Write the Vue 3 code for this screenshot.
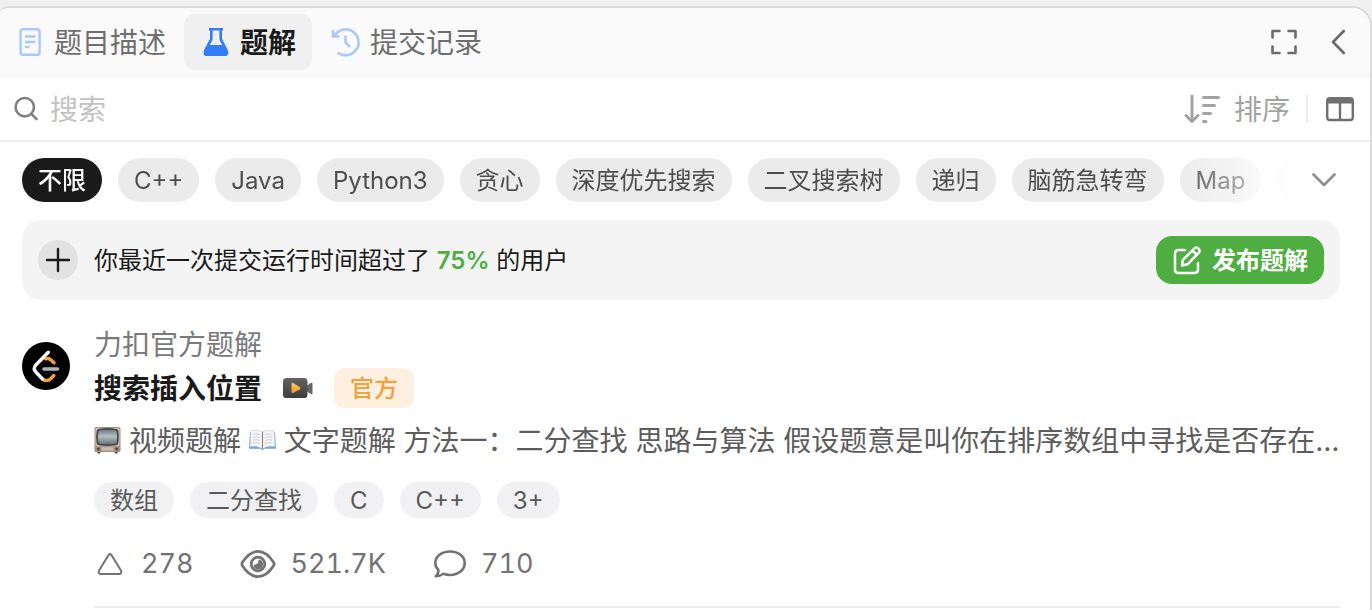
<script setup>
import { ref } from 'vue'

const keyword = ref('')
const active = ref('不限')
const filters = ['不限', 'C++', 'Java', 'Python3', '贪心', '深度优先搜索', '二叉搜索树', '递归', '脑筋急转弯', 'Map', 'String']
const tags = ['数组', '二分查找', 'C', 'C++', '3+']
</script>

<template>
  <main class="panel">
    <header class="tabbar">
      <nav class="tabs">
        <button class="tab first" type="button">
          <svg width="28" height="28" viewBox="0 0 28 28" fill="none" stroke="#a9c8ff" stroke-width="2.4" stroke-linecap="round" stroke-linejoin="round">
            <rect x="6.600" y="1.200" width="19" height="25.600" rx="2.400" />
            <path d="M12 8.500h8.500M12 14h8.500M12 19h2.500" />
          </svg>
          <span>题目描述</span>
        </button>
        <button class="tab current" type="button">
          <svg width="28" height="28" viewBox="0 0 28 28">
            <path fill="#347bf8" fill-rule="evenodd" d="M9 0h14v2.4h-1v7.8c0 .8.2 1.3.8 2.1l5 9.9c1.200 3 .2 5.800-2.400 5.800H6.400C3.800 28 2.800 25.200 4 22.200l5.200-9.900c.6-.8.800-1.300.8-2.100V2.400H9V0Zm3.600 2.400v7.800c0 1.300-.3 2.200-1 3.300L9.800 17h12.400l-1.800-3.500c-.7-1.100-1-2-1-3.300V2.400h-6.800Z" />
          </svg>
          <span>题解</span>
        </button>
        <button class="tab" type="button">
          <svg width="28" height="28" viewBox="0 0 28 28" fill="none" stroke="#a9c8ff" stroke-width="2.600" stroke-linecap="round" stroke-linejoin="round">
            <path d="M4.500 7.500A13 13 0 1 1 8.500 25.200" />
            <path d="M3 3v5.500h5.500" />
            <path d="M15.500 8.500v6l3.800 3.800" />
          </svg>
          <span>提交记录</span>
        </button>
      </nav>
      <div class="actions">
        <button type="button" aria-label="全屏">
          <svg width="26" height="26" viewBox="0 0 26 26" fill="none" stroke="#6b6b6b" stroke-width="2.600" stroke-linecap="round" stroke-linejoin="round">
            <path d="M1.500 8.500V2h7M17.500 2h7v6.500M24.500 17.500V24h-7M8.500 24h-7v-6.500" />
          </svg>
        </button>
        <button type="button" aria-label="收起">
          <svg width="16" height="26" viewBox="0 0 16 26" fill="none" stroke="#6b6b6b" stroke-width="2.600" stroke-linecap="round" stroke-linejoin="round">
            <path d="M13.800 2 3 13l10.800 11" />
          </svg>
        </button>
      </div>
    </header>

    <section class="search">
      <label class="field">
        <svg width="24" height="24" viewBox="0 0 24 24" fill="none" stroke="#808080" stroke-width="2.600" stroke-linecap="round">
          <circle cx="10.800" cy="10.200" r="9.200" />
          <path d="m17.600 17.200 5 5" />
        </svg>
        <input v-model="keyword" type="text" placeholder="搜索" aria-label="搜索" />
      </label>
      <button class="sort" type="button">
        <svg width="36" height="30" viewBox="0 0 36 30" fill="none" stroke="#a3a3a3" stroke-width="3" stroke-linecap="round" stroke-linejoin="round">
          <path d="M8 2v25M2 21.500l6 6 6-6M19.500 3.500h15M19.500 11.500h11M19.500 19.500h7M19.500 27.500h2.500" />
        </svg>
        <span>排序</span>
      </button>
      <button class="layout" type="button" aria-label="布局">
        <svg width="28" height="26" viewBox="0 0 28 26">
          <rect x="1.200" y="2.200" width="25.600" height="21.800" rx="2.800" fill="none" stroke="#707070" stroke-width="2.400" />
          <path d="M1 7.500V4.500Q1 2 3.500 2h21Q27 2 27 4.500v3H1Z" fill="#707070" />
          <path d="M14 7v17" stroke="#707070" stroke-width="2.400" />
        </svg>
      </button>
    </section>

    <div class="content">
      <div class="filters">
        <div class="chips">
          <button v-for="name in filters" :key="name" type="button" class="chip" :class="{ on: name === active }" @click="active = name">
            <span>{{ name }}</span>
          </button>
        </div>
        <button class="more" type="button" aria-label="展开">
          <svg width="24" height="14" viewBox="0 0 24 14" fill="none" stroke="#8c8c8c" stroke-width="2.600" stroke-linecap="round" stroke-linejoin="round">
            <path d="m1.500 1.500 10.500 10.500L22.500 1.500" />
          </svg>
        </button>
      </div>

      <section class="banner">
        <span class="plus">
          <svg width="24" height="24" viewBox="0 0 24 24" stroke="#1a1a1a" stroke-width="2.400" stroke-linecap="round">
            <path d="M12 1v22M1 12h22" />
          </svg>
        </span>
        <p>你最近一次提交运行时间超过了 <b>75%</b> 的用户</p>
        <button class="publish" type="button">
          <svg width="30" height="30" viewBox="0 0 30 30" fill="none" stroke="#fff" stroke-width="2.500" stroke-linecap="round" stroke-linejoin="round">
            <path d="M13 5H6.500Q3 5 3 8.500v16Q3 28 6.500 28h16q3.500 0 3.500-3.500V18" />
            <path d="M10 20.500 10.800 15 22.500 3.300c2.600-2.400 6.700 1.600 4.300 4.300L15.500 19.300 10 20.500ZM20.500 5.500l4.300 4.300" />
          </svg>
          <span>发布题解</span>
        </button>
      </section>

      <article class="post">
        <svg class="avatar" width="48" height="48" viewBox="0 0 48 48" fill="none" stroke-linecap="round" stroke-linejoin="round">
          <circle cx="24" cy="24" r="24" fill="#000" />
          <path d="m23.500 16.800q3.500-.8 5.500 1.200l3 2.800M21 37.500q4.500 2.500 8-1l2.800-3" stroke="#f0a13a" stroke-width="3.400" />
          <path d="M26.300 10.300 13.800 23q-3 3.500 0 7l6.700 7" stroke="#fff" stroke-width="3.400" />
          <path d="M22 27h13.500" stroke="#b3b3b3" stroke-width="3.600" />
        </svg>
        <div class="body">
          <div class="author">力扣官方题解</div>
          <div class="title">
            <h2>搜索插入位置</h2>
            <svg width="30" height="22" viewBox="0 0 30 22">
              <defs>
                <linearGradient id="cam" x1="0" y1="0" x2="0" y2="1"><stop stop-color="#636363" /><stop offset="1" stop-color="#3c3c3c" /></linearGradient>
                <linearGradient id="play" x1="0" y1="0" x2="0" y2="1"><stop stop-color="#ffc65c" /><stop offset="1" stop-color="#ef9a2e" /></linearGradient>
              </defs>
              <path d="M23 9.500 27.500 6q2-1 2 1v9q0 2-2 1L23 13.500Z" fill="#666" />
              <rect y="1" width="24.500" height="20" rx="3.600" fill="url(#cam)" />
              <path d="M8.500 7.500q0-2.500 2.200-1.300l6 3.700q1.800 1.200 0 2.400l-6 3.500Q8.500 17 8.500 14.500Z" fill="url(#play)" />
            </svg>
            <span class="badge">官方</span>
          </div>
          <p class="summary">
            <svg role="img" aria-label="电视" width="27" height="28" viewBox="0 0 28 28">
              <defs>
                <linearGradient id="screen" x1="0" y1="0" x2="0" y2="1"><stop stop-color="#707b7f" /><stop offset=".45" stop-color="#b5c0c3" /><stop offset="1" stop-color="#667276" /></linearGradient>
              </defs>
              <path d="M3 26h4l-1 2H4ZM21 26h4l-1 2h-2Z" fill="#4c403c" />
              <rect x=".5" y=".5" width="27" height="26" rx="2" fill="#a58d84" />
              <rect x="1.500" y="1.500" width="25" height="19" rx="2" fill="#d3c3bb" />
              <path d="M5 2.500Q14 .8 23 2.500q2 0 2.300 2.500.9 6 0 12-.3 2.200-2.300 2.500-9 1.500-18 0-2-.3-2.300-2.500-.9-6 0-12Q3 2.500 5 2.500Z" fill="#414848" />
              <path d="M6 4q8-1.500 16 0 1.500.3 1.600 2 .6 5 0 10-.2 1.500-1.600 1.800-8 1.400-16 0-1.400-.3-1.600-1.800-.6-5 0-10Q4.500 4.300 6 4Z" fill="url(#screen)" />
              <rect x="8" y="21.500" width="12" height="3.500" fill="#cdbbb2" />
              <circle cx="4.500" cy="23.300" r="1.500" fill="#554641" /><circle cx="23.500" cy="23.300" r="1.500" fill="#554641" />
            </svg>
            视频题解
            <svg role="img" aria-label="书" width="27" height="28" viewBox="0 0 28 28">
              <path d="M1 6h26l1 17H16.500q-2.500 2-5 0H0Z" fill="#6da5cf" />
              <path d="M2 4.500Q9 2.500 14 5.500q5-3 12-1L27 21q-7.500-1.500-13 2-5.500-3.500-13-2Z" fill="#f4f4f4" stroke="#c5c8cb" stroke-width=".6" />
              <path d="M14 5.500V23" stroke="#777" stroke-width="1" />
              <path d="M4.500 8q4-.8 7 .5M4.300 11q4-.8 7.200.5M4.100 14q4-.8 7.400.5M3.900 17q4-.8 7.600.5M16.500 8.500q3-1.300 7-.5M16.500 11.500q3-1.300 7.200-.5M16.500 14.500q3-1.300 7.400-.5M16.500 17.500q3-1.300 7.600-.5" fill="none" stroke="#cfcfcf" />
            </svg>
            文字题解 方法一：二分查找 思路与算法 假设题意是叫你在排序数组中寻找是否存在一个目标值，那么可以使用二分查找
          </p>
          <ul class="tags">
            <li v-for="tag in tags" :key="tag">{{ tag }}</li>
          </ul>
          <div class="stats">
            <button class="stat" type="button">
              <svg width="32" height="32" viewBox="0 0 32 32" fill="none" stroke="#737373" stroke-width="2" stroke-linejoin="round">
                <path d="M14.700 6.800q1.300-1.600 2.600 0l9.800 16q.8 2.700-1.600 3.200h-19q-2.400-.5-1.600-3.200Z" />
              </svg>
              <span>278</span>
            </button>
            <span class="stat">
              <svg width="36" height="32" viewBox="0 0 36 32" fill="none" stroke="#737373" stroke-width="2.800" stroke-linejoin="round">
                <path d="M2.400 14.300Q9.500 3.400 18 3.400t15.600 10.900q1 1.700 0 3.400Q26.500 28.600 18 28.600T2.400 17.700q-1-1.700 0-3.400Z" />
                <circle cx="18" cy="16" r="6.800" />
                <path d="M18.500 11.500q.5 5-5 5.500.5 4.500 4.700 4.500 4.800-.2 4.800-5.200 0-4.300-4.500-4.800Z" fill="#737373" stroke="none" />
              </svg>
              <span>521.7K</span>
            </span>
            <button class="stat" type="button">
              <svg width="34" height="32" viewBox="0 0 34 32" fill="none" stroke="#737373" stroke-width="2.600" stroke-linecap="round" stroke-linejoin="round">
                <path d="M18 3.500c8.500 0 14.700 5 14.700 11.700S26.500 27 18 27c-2.500 0-4.800-.5-6.700-1.200-2.300 1.600-4.800 2.500-7.500 2.400 2-1.800 2.800-4 2.500-6.300-2-2-3-4.200-3-6.700C3.300 8.500 9.500 3.500 18 3.500Z" />
              </svg>
              <span>710</span>
            </button>
          </div>
        </div>
      </article>
    </div>
  </main>
</template>

<style>
body {
  background: #f0f0f0;
}
</style>

<style scoped>
* {
  box-sizing: border-box;
}

.panel {
  margin-top: 6px;
  min-height: calc(100vh - 6px);
  border: 2px solid #dadada;
  border-width: 2px 2px 0 0;
  border-radius: 8px 20px 0 0;
  overflow: hidden;
  background: #fff;
  color: #1a1a1a;
  font: 28px/36px Inter, "Noto Sans CJK SC", sans-serif;
}

button {
  display: flex;
  align-items: center;
  border: 0;
  padding: 0;
  background: none;
  color: inherit;
  font: inherit;
  white-space: nowrap;
  cursor: pointer;
}

.tab span,
.sort span,
.chip span,
.publish span,
.field input,
.banner p,
.title h2 {
  padding: 2px 0 0;
}

svg {
  display: block;
  flex: none;
  overflow: visible;
}

p,
h2,
ul {
  margin: 0;
  padding: 0;
}

.tabbar {
  display: flex;
  align-items: center;
  justify-content: space-between;
  height: 70px;
  padding: 0 24px 2px 0;
  background: #fafafa;
}

.tabs {
  display: flex;
  gap: 2px;
}

.tab {
  gap: 12px;
  height: 56px;
  padding: 0 16px;
  border-radius: 10px;
  color: #6e6e6e;
}

.tab.first {
  padding-left: 14px;
}

.tab.current {
  background: #f0f0f0;
  color: #1a1a1a;
  font-weight: 600;
}

.actions {
  display: flex;
  gap: 33px;
}

.search {
  display: flex;
  align-items: center;
  height: 64px;
  padding: 0 16px 0 14px;
  border-bottom: 2px solid #eee;
}

.field {
  display: flex;
  flex: 1;
  align-items: center;
  gap: 12px;
}

.field input {
  flex: 1;
  min-width: 0;
  height: 40px;
  border: 0;
  outline: 0;
  background: none;
  color: #1a1a1a;
  font: inherit;
}

.field input::placeholder {
  color: #c2c2c2;
  opacity: 1;
}

.sort {
  gap: 14px;
  color: #a3a3a3;
}

.layout {
  height: 28px;
  margin-left: 16px;
  padding-left: 18px;
  border-left: 2px solid #ebebeb;
}

.content {
  padding: 16px 30px 0 22px;
}

.filters {
  display: flex;
  align-items: center;
  gap: 16px;
  padding-right: 4px;
}

.chips {
  display: flex;
  flex: 1;
  gap: 16px;
  min-width: 0;
  overflow: hidden;
  mask-image: linear-gradient(to right, #000 calc(100% - 120px), transparent);
}

.chip {
  flex: none;
  height: 44px;
  padding: 0 16px;
  border-radius: 22px;
  background: #ebebeb;
  color: #4d4d4d;
  font-size: 24px;
}

.chip.on {
  background: #1a1a1a;
  color: #fff;
  font-weight: 500;
}

.banner {
  display: flex;
  align-items: center;
  gap: 16px;
  height: 80px;
  margin-top: 18px;
  padding: 0 16px;
  border-radius: 20px;
  background: #f4f4f4;
  font-size: 24px;
}

.banner p {
  flex: 1;
}

.banner b {
  color: #4fae42;
  font-weight: 600;
}

.plus {
  display: grid;
  place-items: center;
  width: 40px;
  height: 40px;
  border-radius: 50%;
  background: #e2e2e2;
}

.publish {
  gap: 10px;
  height: 48px;
  padding: 0 16px;
  border-radius: 16px;
  background: #4fae42;
  color: #fff;
  font-weight: 600;
}

.post {
  display: flex;
  gap: 24px;
  padding-top: 27px;
}

.avatar {
  margin-top: 15px;
}

.body {
  flex: 1;
  min-width: 0;
  padding-bottom: 24px;
  border-bottom: 2px solid #ebebeb;
}

.author {
  color: #7a7a7a;
}

.title {
  display: flex;
  align-items: center;
  margin-top: 5px;
}

.title h2 {
  margin-right: 21px;
  font-size: 28px;
  font-weight: 600;
}

.badge {
  height: 40px;
  margin-left: 21px;
  padding: 2px 16px 0;
  border-radius: 10px;
  background: #fdf0e0;
  color: #f2a33c;
  font-size: 24px;
  font-weight: 500;
  line-height: 38px;
}

.summary {
  margin-top: 15px;
  overflow: hidden;
  color: #5c5c5c;
  text-overflow: ellipsis;
  white-space: nowrap;
}

.summary svg {
  display: inline-block;
  vertical-align: -3px;
}

.tags {
  display: flex;
  gap: 16px;
  margin-top: 23px;
  list-style: none;
}

.tags li {
  padding: 2px 16px 0;
  border-radius: 18px;
  background: #f1f1f4;
  color: #595959;
  font-size: 24px;
  line-height: 34px;
}

.stats {
  display: flex;
  align-items: center;
  gap: 46px;
  height: 36px;
  margin-top: 28px;
  color: #737373;
  font-size: 27px;
  font-variant-numeric: tabular-nums;
}

.stat {
  display: flex;
  align-items: center;
  gap: 15px;
}
</style>
